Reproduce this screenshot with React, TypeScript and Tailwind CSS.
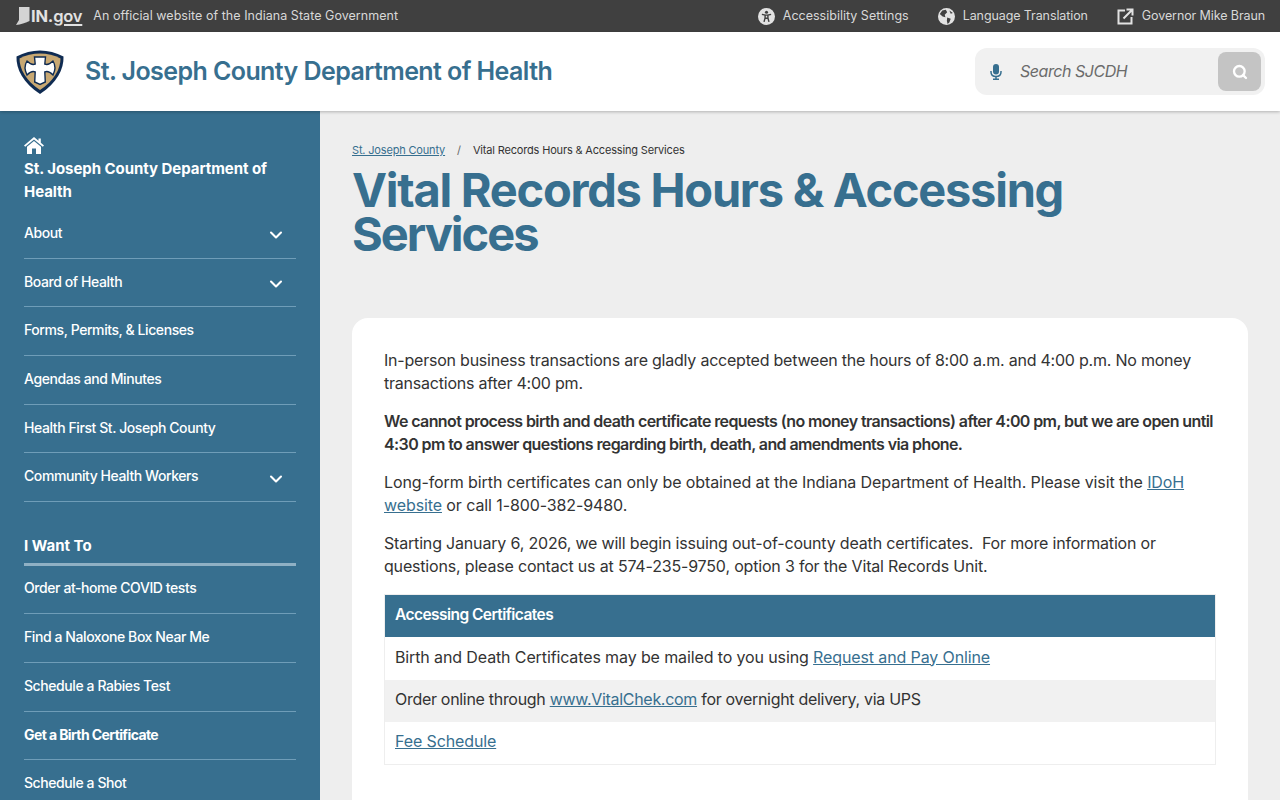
import { ChevronDown, Search } from "lucide-react";

const mainNav = [
  { label: "About", open: true },
  { label: "Board of Health", open: true },
  { label: "Forms, Permits, & Licenses" },
  { label: "Agendas and Minutes" },
  { label: "Health First St. Joseph County" },
  { label: "Community Health Workers", open: true },
];

const wantTo = [
  "Order at-home COVID tests",
  "Find a Naloxone Box Near Me",
  "Schedule a Rabies Test",
  "Get a Birth Certificate",
  "Schedule a Shot",
];

function Shield() {
  return (
    <svg width="50" height="46" viewBox="0 0 50 46">
      <path
        d="M25 1.500C33 1.500 41 3.500 48.500 7.500C49 20 42 34 25 45C8 34 1 20 1.500 7.500C9 3.500 17 1.500 25 1.500Z"
        fill="#0f2b52"
      />
      <path
        d="M25 4.500C32 4.500 39.500 6.300 45.500 9.500C45.500 20 39 32 25 41C11 32 4.500 20 4.500 9.500C10.500 6.300 18 4.500 25 4.500Z"
        fill="#c8a872"
      />
      <path
        d="M19.500 8H30.500L29.800 15C32 16 35 15 38 12C40.500 16 40.500 21 38 26C35 23 32 22 29.800 23L30.300 33L25 35.500L19.700 33L20.200 23C18 22 15 23 12 26C9.500 21 9.500 16 12 12C15 15 18 16 20.200 15Z"
        fill="#ffffff"
        stroke="#0f2b52"
        strokeWidth="1.400"
      />
    </svg>
  );
}

function IndianaShape() {
  return (
    <svg width="14" height="18" viewBox="0 0 14 18">
      <path d="M3 0H13.500V14L10 15.500L7 16.500L3.500 17.500L0 18L1.500 15.500L3 13Z" fill="#d4d4d4" />
    </svg>
  );
}

function AccessIcon() {
  return (
    <svg width="17" height="17" viewBox="0 0 24 24">
      <circle cx="12" cy="12" r="12" fill="#e2e2e2" />
      <circle cx="12" cy="6" r="2.200" fill="#404040" />
      <path d="M5.500 9L10 10V14L8.500 19.500M18.500 9L14 10V14L15.500 19.500M10 10H14M10 14.500H14" stroke="#404040" strokeWidth="2" fill="none" />
    </svg>
  );
}

function GlobeIcon() {
  return (
    <svg width="17" height="17" viewBox="0 0 24 24">
      <circle cx="12" cy="12" r="12" fill="#e2e2e2" />
      <path d="M6 3.500L11 2.500L13 6L9.500 9.500L10.500 13L6.500 12L2.500 8.500ZM13 13.500L18 15L16 20.500L13.500 22.500L12.500 18ZM16 3.500L21 7L18 8Z" fill="#404040" />
    </svg>
  );
}

function ExternalIcon() {
  return (
    <svg width="17" height="17" viewBox="0 0 17 17" fill="none" stroke="#e2e2e2" strokeWidth="2">
      <path d="M8 2.500H1.500V15.500H14.500V9" />
      <path d="M6.500 10.500L15 2M9.500 1.500H15.500V7.500" />
    </svg>
  );
}

function HomeIcon() {
  return (
    <svg width="20" height="17" viewBox="0 0 20 17" fill="#ffffff">
      <path d="M10 0L14.500 3.800V1.500H16.800V5.700L20 8.400L18.800 9.800L10 2.500L1.200 9.800L0 8.400Z" />
      <path d="M10 4L17 9.800V17H12V11.500H8V17H3V9.800Z" />
    </svg>
  );
}

function MicIcon() {
  return (
    <svg width="12" height="16" viewBox="0 0 12 16">
      <rect x="3" y="0" width="6" height="10.500" rx="3" fill="#376f8f" />
      <path d="M1 7V8C1 10.800 3.200 12.500 6 12.500C8.800 12.500 11 10.800 11 8V7" fill="none" stroke="#376f8f" strokeWidth="1.500" />
      <path d="M6 12.500V15M3 15.300H9" fill="none" stroke="#376f8f" strokeWidth="1.500" />
    </svg>
  );
}

function NavRow({ label, open, bold }: { label: string; open?: boolean; bold?: boolean }) {
  return (
    <li className="h-[48.7px] border-b border-[#6f9db8] flex items-center justify-between pb-[3px]">
      <span className={`text-[14px] text-white ${bold ? "font-bold tracking-[-0.6px]" : "font-medium tracking-[-0.42px]"}`}>{label}</span>
      {open && <ChevronDown size={20} strokeWidth={2.5} className="text-white mr-[10px] mt-[6px]" />}
    </li>
  );
}

export default function App() {
  return (
    <div className="h-screen overflow-hidden flex flex-col bg-[#eeeeee] font-['Inter',sans-serif] text-[#333333]">
      <div className="h-8 shrink-0 bg-[#404040] flex items-center justify-between pl-4 pr-[15px] text-[12.500px] text-[#d8d8d8]">
        <div className="flex items-center">
          <IndianaShape />
          <span className="ml-[1px] font-bold text-[16.500px] text-[#e2e2e2] tracking-[-0.2px]">
            IN.<span className="font-semibold underline decoration-2 underline-offset-2">gov</span>
          </span>
          <span className="ml-[11px] tracking-[0.04px]">An official website of the Indiana State Government</span>
        </div>
        <div className="flex items-center">
          <AccessIcon />
          <span className="ml-2">Accessibility Settings</span>
          <span className="ml-[29px]"><GlobeIcon /></span>
          <span className="ml-2 tracking-[-0.1px]">Language Translation</span>
          <span className="ml-[29px]"><ExternalIcon /></span>
          <span className="ml-2 tracking-[-0.1px]">Governor Mike Braun</span>
        </div>
      </div>

      <header className="h-[79px] shrink-0 bg-white flex items-center justify-between pl-[15px] pr-[15px] shadow-[0_1px_3px_rgba(0,0,0,0.25)] z-10">
        <div className="flex items-center">
          <Shield />
          <span className="ml-[20px] text-[25px] font-semibold tracking-[-0.58px] text-[#376f8f] mt-[1px]">
            St. Joseph County Department of Health
          </span>
        </div>
        <div className="w-[290px] h-[47px] rounded-xl bg-[#f1f1f1] flex items-center pl-[15px] pr-[4px]">
          <MicIcon />
          <span className="ml-[18px] flex-1 italic text-[16px] tracking-[-0.45px] text-[#6b6b6b] mb-[1px]">Search SJCDH</span>
          <div className="w-[43px] h-[39px] rounded-lg bg-[#c4c4c4] flex items-center justify-center">
            <Search size={16} strokeWidth={3.500} className="text-white" />
          </div>
        </div>
      </header>

      <div className="flex-1 min-h-0 flex">
        <aside className="w-80 shrink-0 bg-[#376f8f] pl-6 pr-6 pt-[26px]">
          <HomeIcon />
          <div className="text-[15px] leading-[23px] font-bold text-white tracking-[-0.05px] mt-[3px]">
            St. Joseph County Department of Health
          </div>
          <ul className="mt-[7px]">
            {mainNav.map((n) => (
              <NavRow key={n.label} label={n.label} open={n.open} />
            ))}
          </ul>
          <div className="mt-[33px] pb-[5px] border-b-[3px] border-[#8fb0c4] text-[15px] font-bold text-white">I Want To</div>
          <ul>
            {wantTo.map((n) => (
              <NavRow key={n} label={n} bold={n === "Get a Birth Certificate"} />
            ))}
          </ul>
        </aside>

        <main className="flex-1 min-w-0 pl-8 pr-8 pt-[32px]">
          <div className="flex items-center text-[11px] tracking-[-0.17px] h-[14px]">
            <a className="underline text-[#376f8f]">St. Joseph County</a>
            <span className="mx-[12px] text-[#666666]">/</span>
            <span>Vital Records Hours &amp; Accessing Services</span>
          </div>
          <h1 className="mt-[11px] text-[47px] leading-[44px] font-bold text-[#376f8f] tracking-[-1.27px]">
            Vital Records Hours &amp; Accessing<br /><span className="tracking-[-2px]">Services</span>
          </h1>
          <section className="mt-[62px] bg-white rounded-2xl px-8 pt-[31px] pb-16 text-[16px] leading-[22.500px] tracking-[-0.18px] text-[#333333]">
            <p className="tracking-[-0.22px]">
              In-person business transactions are gladly accepted between the hours of 8:00 a.m. and 4:00 p.m. No money
              transactions after 4:00 pm.
            </p>
            <p className="mt-4 font-semibold tracking-[-0.6px]">
              We cannot process birth and death certificate requests (no money transactions) after 4:00 pm, but we are open until
              4:30 pm to answer questions regarding birth, death, and amendments via phone.
            </p>
            <p className="mt-4 tracking-[-0.1px]">
              Long-form birth certificates can only be obtained at the Indiana Department of Health. Please visit the{" "}
              <a className="underline text-[#376f8f]">IDoH website</a> or call 1-800-382-9480.
            </p>
            <p className="mt-4">
              Starting January 6, 2026, we will begin issuing out-of-county death certificates.&nbsp; For more information or
              questions, please contact us at 574-235-9750, option 3 for the Vital Records Unit.
            </p>
            <div className="mt-[17px] border border-[#eeeeee] tracking-[-0.12px]">
              <div className="h-[42px] bg-[#376f8f] flex items-center px-[10px] pb-[2px] text-[15.500px] font-semibold tracking-[-0.55px] text-white">Accessing Certificates</div>
              <div className="h-[43px] flex items-center px-[10px] pb-[3px]">
                <span>
                  Birth and Death Certificates may be mailed to you using{" "}
                  <a className="underline text-[#376f8f]">Request and Pay Online</a>
                </span>
              </div>
              <div className="h-[42px] bg-[#f1f1f1] flex items-center px-[10px] pb-[4px] tracking-[-0.3px]">
                <span>
                  Order online through <a className="underline text-[#376f8f]">www.VitalChek.com</a> for overnight delivery, via UPS
                </span>
              </div>
              <div className="h-[42px] flex items-center px-[10px] pb-[4px]">
                <a className="underline text-[#376f8f]">Fee Schedule</a>
              </div>
            </div>
          </section>
        </main>
      </div>
    </div>
  );
}
